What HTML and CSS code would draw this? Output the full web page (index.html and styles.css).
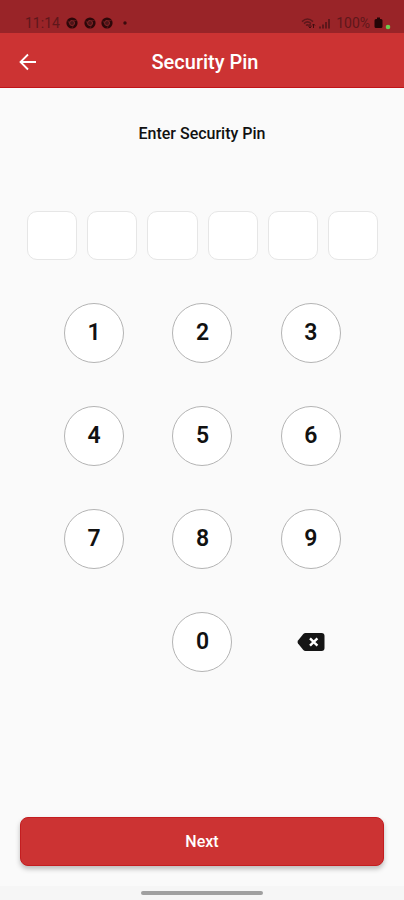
FILE: index.html
```html
<!DOCTYPE html>
<html lang="en">
<head>
<meta charset="utf-8">
<meta name="viewport" content="width=device-width, initial-scale=1">
<title>Security Pin</title>
<link rel="stylesheet" href="styles.css">
</head>
<body>
<div class="status">
  <div class="status-group">
    <span class="status-time">11:14</span>
    <svg class="status-apps" width="62" height="12" viewBox="0 0 62 12" aria-hidden="true">
      <defs>
        <g id="browser">
          <circle cx="6" cy="6" r="5.6" fill="#2d0709"/>
          <circle cx="6" cy="6" r="2.5" fill="#4b1518" stroke="#8a2629" stroke-width="1"/>
          <path d="M6 3.5h4.6M3.8 7.2 1.6 3.4M8.2 7.2 6 11" stroke="#6c1c20" stroke-width=".7"/>
        </g>
      </defs>
      <use href="#browser"/>
      <use href="#browser" x="18"/>
      <use href="#browser" x="35"/>
      <circle cx="59" cy="6" r="1.7" fill="#3a0b0d"/>
    </svg>
  </div>
  <div class="status-group status-right">
    <svg width="31" height="13" viewBox="0 0 31 13" fill="none" stroke="#5e171b" aria-hidden="true">
      <path d="M1 4.6Q6.500-.6 12 4.600M3 6.600Q6.500 3.200 10 6.600M5 8.500Q6.500 7.200 8 8.500" stroke-width="1.500"/>
      <path d="M9 7v4m-1.500-1.500L9 11l1.500-1.500M12.500 11V7M11 8.500 12.500 7 14 8.500" stroke="#3f0d10"/>
      <path d="M19 11.500V9.500M22 11.500V7.500M25 11.500V5M28 11.500V2" stroke-width="2"/>
    </svg>
    <span class="status-battery">100%</span>
    <svg width="18" height="14" viewBox="0 0 18 14" aria-hidden="true">
      <path d="M3 1.500h3V3h1a1.500 1.500 0 0 1 1.500 1.500v6A1.500 1.500 0 0 1 7 12H2a1.500 1.500 0 0 1-1.500-1.500v-6A1.500 1.500 0 0 1 2 3h1z" fill="#240507"/>
      <circle cx="14" cy="11" r="2.300" fill="#6cc950"/>
    </svg>
  </div>
</div>
<header class="appbar">
  <button class="back" type="button" aria-label="Back">
    <svg width="18" height="18" viewBox="0 0 18 18" fill="none" stroke="#fff" stroke-width="1.800" aria-hidden="true"><path d="M17 9H2M9 1.500 1.500 9 9 16.500"/></svg>
  </button>
  <h1 class="title">Security Pin</h1>
</header>
<main class="main">
  <h2 class="prompt">Enter Security Pin</h2>
  <div class="pins">
    <input class="pin" type="password" inputmode="numeric" maxlength="1" aria-label="Digit 1">
    <input class="pin" type="password" inputmode="numeric" maxlength="1" aria-label="Digit 2">
    <input class="pin" type="password" inputmode="numeric" maxlength="1" aria-label="Digit 3">
    <input class="pin" type="password" inputmode="numeric" maxlength="1" aria-label="Digit 4">
    <input class="pin" type="password" inputmode="numeric" maxlength="1" aria-label="Digit 5">
    <input class="pin" type="password" inputmode="numeric" maxlength="1" aria-label="Digit 6">
  </div>
  <div class="keypad">
    <button class="key" type="button">1</button>
    <button class="key" type="button">2</button>
    <button class="key" type="button">3</button>
    <button class="key" type="button">4</button>
    <button class="key" type="button">5</button>
    <button class="key" type="button">6</button>
    <button class="key" type="button">7</button>
    <button class="key" type="button">8</button>
    <button class="key" type="button">9</button>
    <button class="key key-zero" type="button">0</button>
    <button class="key key-delete" type="button" aria-label="Delete">
      <svg width="28" height="18" viewBox="0 0 28 18" aria-hidden="true">
        <path d="M8.500 0H24.500A3 3 0 0 1 27.500 3V15A3 3 0 0 1 24.500 18H8.500Q7.300 18 6.300 17L1 10.400Q0 9 1 7.600L6.300 1Q7.300 0 8.500 0Z" fill="#151515"/>
        <path d="m13 5.300 7.400 7.400m0-7.400L13 12.700" stroke="#fff" stroke-width="2.400"/>
      </svg>
    </button>
  </div>
  <button class="next" type="button">Next</button>
</main>
<footer class="navbar"><span class="handle"></span></footer>
</body>
</html>
```
FILE: styles.css
```css
* {
  box-sizing: border-box;
}

body {
  margin: 0;
  min-height: 100vh;
  display: flex;
  flex-direction: column;
  background: #fafafa;
  color: #111;
  font-family: Roboto, sans-serif;
}

button {
  font-family: inherit;
  padding: 0;
  border: 0;
  cursor: pointer;
}

svg {
  display: block;
}

.status {
  display: flex;
  justify-content: space-between;
  height: 33px;
  padding: 13px 12px 0 25px;
  background: #992428;
  color: #5e171b;
  font-size: 14px;
  line-height: 20px;
}

.status-group {
  display: flex;
  align-items: center;
  height: 20px;
  gap: 6px;
}

.status-right {
  gap: 4px;
}

.appbar {
  display: grid;
  grid-template-columns: 56px 1fr 50px;
  align-items: center;
  height: 55px;
  padding-top: 3px;
  background: #cc3333;
  border-bottom: 1px solid #c01418;
  color: #fff;
}

.back {
  display: grid;
  place-items: center;
  height: 48px;
  background: none;
}

.title {
  margin: 0;
  font-size: 20px;
  font-weight: 500;
  line-height: 24px;
  text-align: center;
}

.main {
  flex: 1;
  display: flex;
  flex-direction: column;
  padding: 36px 20px 20px;
}

.prompt {
  margin: 0;
  font-size: 16px;
  font-weight: 500;
  line-height: 20px;
  text-align: center;
}

.pins {
  display: flex;
  gap: 10px;
  margin: 67px 6px 0 7px;
}

.pin {
  flex: 1;
  min-width: 0;
  height: 49px;
  padding: 0;
  border: 1px solid #e6e6e6;
  border-radius: 10px;
  background: #fff;
  font-size: 20px;
  text-align: center;
}

.keypad {
  display: grid;
  grid-template-columns: repeat(3, 1fr);
  justify-items: center;
  row-gap: 43px;
  margin: 43px 19px 43px 20px;
}

.key {
  display: grid;
  place-items: center;
  width: 60px;
  height: 60px;
  border: 1px solid #b4b4b4;
  border-radius: 50%;
  background: #fff;
  color: #111;
  font-size: 23px;
  font-weight: 600;
  line-height: 28px;
}

.key-zero {
  grid-column: 2;
}

.key-delete {
  border: 0;
  background: none;
}

.next {
  height: 49px;
  margin-top: auto;
  border: 1px solid #c41d20;
  border-radius: 8px;
  background: #cc3333;
  box-shadow: 0 3px 5px rgba(0, 0, 0, 0.25);
  color: #fff;
  font-size: 16px;
  font-weight: 500;
  line-height: 20px;
}

.navbar {
  display: flex;
  justify-content: center;
  height: 14px;
  padding-top: 5px;
  background: #f6f6f6;
}

.handle {
  width: 30%;
  height: 4px;
  border-radius: 2px;
  background: #a0a0a0;
}
```
